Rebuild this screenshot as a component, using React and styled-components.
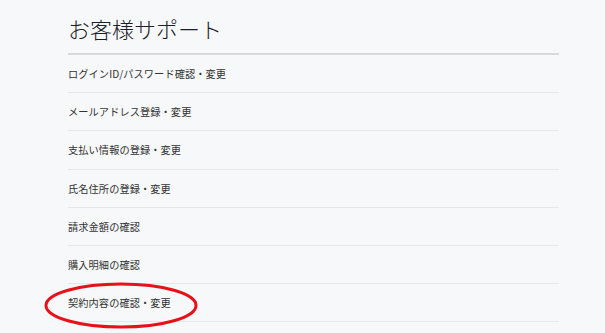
import React from 'react';
import styled, { createGlobalStyle } from 'styled-components';

const GlobalStyle = createGlobalStyle`
  html, body {
    margin: 0;
    padding: 0;
    background: #f7f8fa;
  }
  body {
    font-family: "Noto Sans CJK JP", "Noto Sans", sans-serif;
    color: #333;
  }
`;

const Page = styled.div`
  padding: 0 46px 0 68px;
  min-height: 333px;
  box-sizing: border-box;
`;

const Title = styled.h1`
  margin: 0;
  height: 55px;
  display: flex;
  align-items: center;
  font-size: 22px;
  font-weight: 300;
  color: #1e1e28;
  border-bottom: 2px solid #d9d9db;
  padding-top: 2px;
  box-sizing: border-box;
`;

const MenuList = styled.ul`
  list-style: none;
  margin: 0;
  padding: 0;
`;

const MenuItem = styled.li`
  position: relative;
  height: 38.2px;
  display: flex;
  align-items: center;
  border-bottom: 1px solid #e6e7ea;
  box-sizing: border-box;
  font-size: 10.2px;
  letter-spacing: 0.1px;
  color: #333;
`;

const Highlight = styled.svg`
  position: absolute;
  left: -24px;
  top: -2px;
  width: 154px;
  height: 47px;
  overflow: visible;
`;

const items = [
  'ログインID/パスワード確認・変更',
  'メールアドレス登録・変更',
  '支払い情報の登録・変更',
  '氏名住所の登録・変更',
  '請求金額の確認',
  '購入明細の確認',
  '契約内容の確認・変更',
];

export default function App() {
  return (
    <>
      <GlobalStyle />
      <Page>
        <Title>お客様サポート</Title>
        <MenuList>
          {items.map((label, i) => (
            <MenuItem key={label}>
              {label}
              {i === items.length - 1 && (
                <Highlight viewBox="0 0 154 47">
                  <ellipse cx="77" cy="23.5" rx="75" ry="21.5" fill="none" stroke="#e8101a" strokeWidth="3" />
                </Highlight>
              )}
            </MenuItem>
          ))}
        </MenuList>
      </Page>
    </>
  );
}
